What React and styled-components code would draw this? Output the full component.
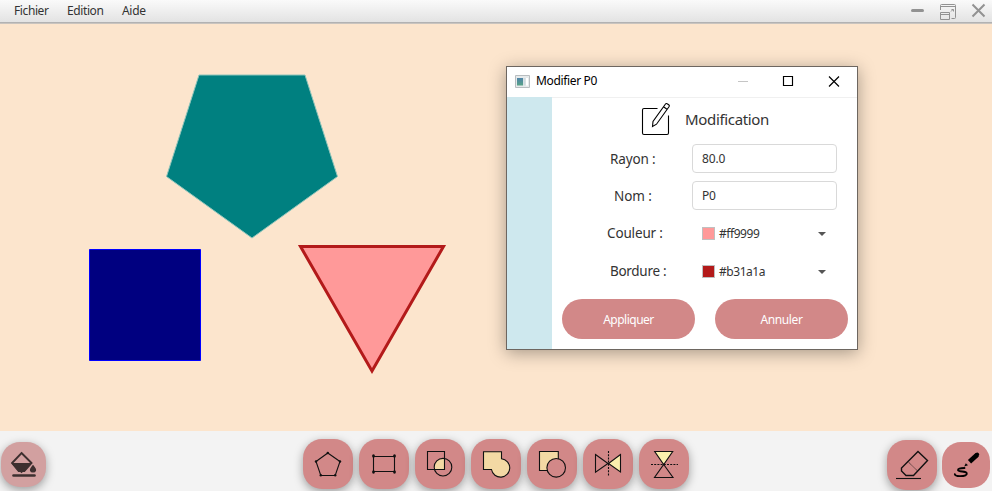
import React from "react";
import styled, { createGlobalStyle } from "styled-components";

const GlobalStyle = createGlobalStyle`
  * { box-sizing: border-box; }
  body { margin: 0; overflow: hidden; font-family: "Noto Sans", "Open Sans", sans-serif; color: #333; }
  svg { display: block; }
`;

const Screen = styled.div`
  width: 992px;
  height: 491px;
  display: flex;
  flex-direction: column;
  overflow: hidden;
`;

const MenuBar = styled.header`
  height: 24px;
  flex: none;
  display: flex;
  justify-content: space-between;
  background: linear-gradient(#fafafa, #e3e3e3 22px);
  border-bottom: 1px solid #c9c4bf;
  box-shadow: inset 0 -1px 0 #b2b2b2;
`;

const Menus = styled.nav`
  display: flex;
  gap: 18px;
  padding-left: 14px;
`;

const MenuItem = styled.span`
  width: ${(p) => p.$width}px;
  white-space: nowrap;
  font-size: 12px;
  line-height: 22px;
  letter-spacing: ${(p) => p.$spacing || 0}px;
`;

const WindowControls = styled.div`
  width: 82px;
  flex: none;
`;

const Canvas = styled.main`
  position: relative;
  height: 407px;
  flex: none;
  background: #fce5cd;
`;

const Dialog = styled.section`
  position: absolute;
  left: 506px;
  top: 42px;
  width: 352px;
  height: 284px;
  display: flex;
  flex-direction: column;
  background: #fff;
  border: 1px solid #6d6660;
  box-shadow: 0 3px 16px rgba(0, 0, 0, 0.34);
`;

const TitleBar = styled.div`
  height: 31px;
  flex: none;
  display: flex;
  align-items: center;
  padding: 0 0 2px 8px;
  border-bottom: 1px solid #f0f0f0;
`;

const Title = styled.span`
  flex: 1;
  padding-left: 6px;
  font-size: 12px;
  letter-spacing: -0.35px;
  line-height: 28px;
  color: #000;
`;

const DialogBody = styled.div`
  flex: 1;
  display: flex;
`;

const SideStrip = styled.div`
  width: 45px;
  margin-top: -1px;
  background: #cee8ee;
`;

const Form = styled.div`
  flex: 1;
  display: flex;
  flex-direction: column;
`;

const Heading = styled.div`
  height: 42px;
  display: flex;
  padding-left: 88px;
  gap: 13px;
`;

const HeadingText = styled.span`
  font-size: 15px;
  line-height: 43px;
  letter-spacing: -0.34px;
`;

const FormRow = styled.div`
  display: grid;
  grid-template-columns: 140px 145px;
  height: ${(p) => p.$height || 37}px;
  align-items: center;
`;

const Label = styled.label`
  padding-left: ${(p) => p.$indent}px;
  font-size: 13.5px;
  line-height: 20px;
  letter-spacing: ${(p) => p.$spacing || 0}px;
  white-space: nowrap;
`;

const Field = styled.div`
  height: 29px;
  padding-left: 9px;
  border: 1px solid #d9d9d9;
  border-radius: 4px;
  font-size: 12px;
  line-height: 27px;
  letter-spacing: -0.15px;
`;

const ColorPicker = styled.div`
  display: flex;
  align-items: center;
  padding: 0 10px;
  height: 28px;
`;

const Swatch = styled.i`
  width: 13px;
  height: 13px;
  background: ${(p) => p.$color};
  border: 1px solid #c0c0c0;
`;

const ColorCode = styled.span`
  flex: 1;
  padding: 2px 0 0 4px;
  font-size: 12px;
  line-height: 20px;
  letter-spacing: ${(p) => p.$spacing}px;
`;

const Caret = styled.i`
  margin: 2px 1px 0 0;
  border: 4px solid transparent;
  border-top: 4px solid #555;
  border-bottom: 0;
`;

const Actions = styled.div`
  display: flex;
  gap: 20px;
  padding: 9px 0 0 10px;
`;

const PillButton = styled.button`
  width: 133px;
  height: 40px;
  padding: 1px 0 0;
  border: 0;
  border-radius: 20px;
  background: #d28888;
  color: #fff;
  font: 12px/39px "Noto Sans", sans-serif;
  letter-spacing: ${(p) => p.$spacing}px;
`;

const ToolBar = styled.footer`
  height: 60px;
  flex: none;
  display: flex;
  justify-content: space-between;
  padding: 8px 2px 0 1px;
  background: #f3f3f3;
`;

const ToolGroup = styled.div`
  display: flex;
  gap: ${(p) => p.$gap || 6}px;
  margin-left: ${(p) => p.$shift || 0}px;
`;

const ToolButton = styled.button`
  width: ${(p) => p.$width || 50}px;
  height: ${(p) => p.$height || 50}px;
  margin: ${(p) => p.$top || 0}px 0 0;
  padding: 0;
  border: 0;
  border-radius: 19px;
  background: ${(p) => (p.$faded ? "#d2a0a0" : "#d28888")};
  box-shadow: ${(p) => (p.$flat ? "none" : "0 3px 10px rgba(0, 0, 0, 0.36)")};
`;

const Glyph = ({ w = 50, h = 50, color = "#111", children }) => (
  <svg width={w} height={h} viewBox={`0 0 ${w} ${h}`} fill="none" stroke={color} strokeWidth="1.1">
    {children}
  </svg>
);

const TOOLS = [
  {
    name: "Polygone",
    art: (
      <>
        <path d="M24.8 14 37 22.5 32.2 36.5H17.8L13 22.5Z" />
        {[[24.8, 14], [37, 22.5], [32.2, 36.3], [17.8, 36.3], [13, 22.5]].map(([x, y]) => (
          <circle key={`${x}-${y}`} cx={x} cy={y} r="1.2" fill="#111" stroke="none" />
        ))}
      </>
    ),
  },
  {
    name: "Rectangle",
    art: (
      <>
        <path d="M14.5 17.5H35.5V32.5H14.5Z" />
        {[[14.5, 17], [35.5, 17], [35.5, 33], [14.5, 33]].map(([x, y]) => (
          <ellipse key={`${x}-${y}`} cx={x} cy={y} rx="1.4" ry="1.8" fill="#111" stroke="none" />
        ))}
      </>
    ),
  },
  {
    name: "Intersection",
    art: (
      <>
        <path d="M29.5 19.6V30.5H19.4A9 9 0 0 1 29.5 19.6Z" fill="#f3d9a4" stroke="none" />
        <path d="M12.5 12.5H29.5V30.5H12.5Z" />
        <circle cx="28" cy="28.2" r="8.8" />
      </>
    ),
  },
  {
    name: "Union",
    art: <path d="M12.5 12.8H30.5V19.8A9.2 9.2 0 1 1 20.5 30.5H12.5Z" fill="#f3d9a4" />,
  },
  {
    name: "Soustraction",
    art: (
      <>
        <path d="M12.5 12.5H31.3V31.5H12.5Z" fill="#f3d9a4" />
        <circle cx="29.2" cy="28.8" r="9.3" fill="#d28888" />
      </>
    ),
  },
  {
    name: "Symétrie verticale",
    art: (
      <>
        <path d="M12.5 15.5 25 24.5 12.5 33.3Z" />
        <path d="M37.5 15.5 25.5 24.5 37.5 33Z" fill="#fbefae" />
        <path d="M25.5 12V37" strokeDasharray="2 1.2" />
      </>
    ),
  },
  {
    name: "Symétrie horizontale",
    art: (
      <>
        <path d="M15.7 12.5H33.7L24.7 25.5Z" fill="#fbefae" />
        <path d="M24.7 25.5 34 38.5H15.5Z" />
        <path d="M12 25.5H39" strokeDasharray="2 1.2" />
      </>
    ),
  },
];

function ColorRow({ label, indent, spacing, color, codeSpacing, height }) {
  return (
    <FormRow $height={height}>
      <Label $indent={indent} $spacing={spacing}>{label}</Label>
      <ColorPicker>
        <Swatch $color={color} />
        <ColorCode $spacing={codeSpacing}>{color}</ColorCode>
        <Caret />
      </ColorPicker>
    </FormRow>
  );
}

function EditDialog() {
  return (
    <Dialog>
      <TitleBar>
        <svg width="15" height="13" viewBox="0 0 15 13">
          <defs>
            <linearGradient id="pane" x2="0" y2="1">
              <stop stopColor="#4f83a8" />
              <stop offset="1" stopColor="#58a387" />
            </linearGradient>
          </defs>
          <path d="M.5.5H14.5V12.5H.5Z" fill="#e6eaeb" stroke="#b8bdc0" />
          <path d="M2 3H8V10.5H2Z" fill="url(#pane)" />
          <path d="M8.5 3H10.5V10.5H8.5Z" fill="#cfdbde" />
          <path d="M11 3H13V10.5H11Z" fill="#fff" />
        </svg>
        <Title>Modifier P0</Title>
        <svg width="120" height="28" viewBox="0 0 120 28" fill="none" stroke="#000">
          <path d="M1 14.5H11" stroke="#c5c5c5" />
          <path d="M46.5 9.5H55.5V18.5H46.5Z" strokeWidth="1.15" />
          <path d="M92 9.5 102 19.5M102 9.5 92 19.5" strokeWidth="1.15" />
        </svg>
      </TitleBar>
      <DialogBody>
        <SideStrip />
        <Form>
          <Heading>
            <svg width="32" height="42" viewBox="0 0 32 42" fill="none" stroke="#000" strokeWidth="1.1">
              <path d="M17.5 10.5H4Q2.5 10.5 2.5 12V35Q2.5 36.5 4 36.5H27Q28.5 36.5 28.5 35V17.5" />
              <path d="M12.5 28.5 13 23.5 25.5 6Q26.2 5 27.2 5.8L29 7Q29.8 7.7 29 8.8L16.5 26.2 12.5 28.5ZM23.5 8.8 27 11.3" />
            </svg>
            <HeadingText>Modification</HeadingText>
          </Heading>
          <FormRow $height={37}>
            <Label $indent={58} $spacing={-0.15}>Rayon :</Label>
            <Field>80.0</Field>
          </FormRow>
          <FormRow $height={37}>
            <Label $indent={62} $spacing={-0.1}>Nom :</Label>
            <Field>P0</Field>
          </FormRow>
          <ColorRow height={38} label="Couleur :" indent={55} spacing={-0.15} color="#ff9999" codeSpacing={-0.45} />
          <ColorRow height={38} label="Bordure :" indent={58} spacing={-0.3} color="#b31a1a" codeSpacing={-0.45} />
          <Actions>
            <PillButton $spacing={-0.5}>Appliquer</PillButton>
            <PillButton $spacing={-0.4}>Annuler</PillButton>
          </Actions>
        </Form>
      </DialogBody>
    </Dialog>
  );
}

export default function App() {
  return (
    <Screen>
      <GlobalStyle />
      <MenuBar>
        <Menus>
          <MenuItem $width={35} $spacing={-0.4}>Fichier</MenuItem>
          <MenuItem $width={37} $spacing={-0.4}>Edition</MenuItem>
          <MenuItem $width={25} $spacing={-0.3}>Aide</MenuItem>
        </Menus>
        <WindowControls>
          <svg width="82" height="22" viewBox="0 0 82 22" fill="none" stroke="#929292">
            <path d="M2.5 10.5H12.5" strokeWidth="3" strokeLinecap="round" />
            <path d="M30.5 10V5.5Q30.5 4.5 31.5 4.5H44.5Q45.5 4.5 45.5 5.5V17.5Q45.5 18.5 44.5 18.5H41.5M31 6.5H45M30.5 12.5H39.5V19.5H30.5ZM31 14.5H39M41 11.5 43 9.5M41.5 9.5H43.5V11.5" />
            <path d="M62.5 4.5 74.5 16.5M74.5 4.5 62.5 16.5" strokeWidth="2" />
          </svg>
        </WindowControls>
      </MenuBar>
      <Canvas>
        <svg width="500" height="407" viewBox="0 0 500 407">
          <path d="M199 51H305L337.5 152.5 252 214 166.5 152.5Z" fill="#008080" stroke="#8fc5bb" />
          <path d="M89.5 225.5H200.5V336.5H89.5Z" fill="#000080" stroke="#0000ff" />
          <path d="M300.5 222.5H443.5L372 347Z" fill="#ff9999" stroke="#b31a1a" strokeWidth="3" />
        </svg>
        <EditDialog />
      </Canvas>
      <ToolBar>
        <ToolButton aria-label="Remplissage" $width={45} $height={45} $top={3} $faded>
          <Glyph w={45} h={45} color="#3d2f2f">
            <path d="M20.5 11 30.3 20.8 20.5 30 11.3 20.8Z" strokeWidth="1.9" />
            <path d="M11 21.5H30.5L23.5 29.5H17.5Z" fill="#3d2f2f" />
            <path d="M32 23.5Q35 27 34.5 28.5Q34 30 32 30T29.5 28.5Q29 27 32 23.5Z" fill="#3d2f2f" />
            <path d="M12.5 33.5H33.5" strokeWidth="2.6" strokeLinecap="round" />
          </Glyph>
        </ToolButton>
        <ToolGroup $shift={59}>
          {TOOLS.map((tool) => (
            <ToolButton key={tool.name} aria-label={tool.name}>
              <Glyph>{tool.art}</Glyph>
            </ToolButton>
          ))}
        </ToolGroup>
        <ToolGroup $gap={5}>
          <ToolButton aria-label="Gomme" $top={1}>
            <Glyph>
              <path d="M31 11.5 40.5 20.5 26.5 35.5H19L14.5 31V28Z" strokeWidth="1.4" />
              <path d="M21 21.7 30.3 30.7" strokeDasharray="1 .6" strokeWidth=".8" />
              <path d="M9 38.5H34" />
            </Glyph>
          </ToolButton>
          <ToolButton aria-label="Pinceau" $width={48} $height={46} $top={3} $flat>
            <Glyph w={48} h={46}>
              <path d="M27.5 19.8 35.2 12.8" stroke="#000" strokeWidth="4.8" />
              <path d="M34.3 13.4 35.2 12.6" stroke="#000" strokeWidth="4" strokeLinecap="round" />
              <path d="M23.8 21.3 26 23.2 22.2 24.5Z" fill="#000" stroke="none" />
              <path d="M22.5 26Q15.5 26.2 16 28.2C17 30 24 29 24.8 31.2Q25.5 34 18 34.2Q13 34.2 12.8 32.2" stroke="#000" strokeWidth="1.8" strokeLinecap="round" />
            </Glyph>
          </ToolButton>
        </ToolGroup>
      </ToolBar>
    </Screen>
  );
}
